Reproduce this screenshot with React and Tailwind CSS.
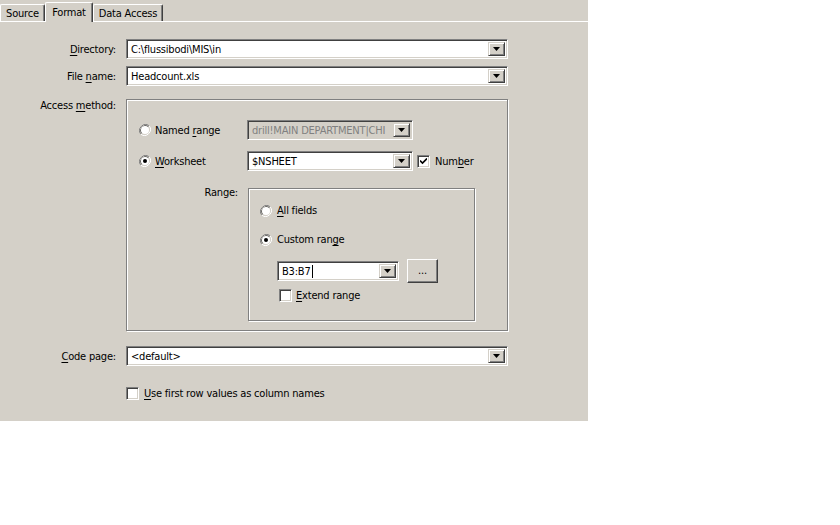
import React from "react";

const font = { fontFamily: '"DejaVu Sans Condensed", "Liberation Sans", Arial, sans-serif' };

function U({ children }) {
  return <span className="underline underline-offset-2">{children}</span>;
}

function Arrow() {
  return (
    <svg width="7" height="4" viewBox="0 0 7 4">
      <path d="M0 0h7L3.5 4z" fill="#000" />
    </svg>
  );
}

function DropButton() {
  return (
    <div className="w-[17px] h-full flex items-center justify-center bg-[#d4d0c8] border border-t-[#d4d0c8] border-l-[#d4d0c8] border-r-[#404040] border-b-[#404040] shadow-[inset_1px_1px_0_#fff,inset_-1px_-1px_0_#808080]">
      <Arrow />
    </div>
  );
}

function Combo({ value, className = "", disabled, caret }) {
  return (
    <div
      className={`flex items-stretch h-[20px] border border-t-[#808080] border-l-[#808080] border-r-white border-b-white shadow-[inset_1px_1px_0_#404040,inset_-1px_-1px_0_#d4d0c8] p-[2px] ${
        disabled ? "bg-[#d4d0c8]" : "bg-white"
      } ${className}`}
    >
      <div
        className={`flex-1 flex items-center pl-[2px] whitespace-nowrap overflow-hidden ${
          disabled ? "text-[#808080]" : "text-black"
        }`}
      >
        {value}
        {caret && <span className="inline-block w-px h-[13px] bg-black ml-px" />}
      </div>
      <DropButton />
    </div>
  );
}

function Radio({ checked }) {
  return (
    <svg width="12" height="12" viewBox="0 0 12 12" className="shrink-0">
      <path d="M10.2 1.8A6 6 0 0 0 1.8 10.2" stroke="#808080" fill="none" />
      <path d="M9.4 2.6A4.9 4.9 0 0 0 2.6 9.4" stroke="#404040" fill="none" />
      <path d="M1.8 10.2A6 6 0 0 0 10.2 1.8" stroke="#fff" fill="none" />
      <path d="M2.6 9.4A4.9 4.9 0 0 0 9.4 2.6" stroke="#d4d0c8" fill="none" />
      <circle cx="6" cy="6" r="4" fill="#fff" />
      {checked && <circle cx="6" cy="6" r="2" fill="#000" />}
    </svg>
  );
}

function Check({ checked }) {
  return (
    <div className="w-[13px] h-[13px] shrink-0 bg-white border border-t-[#808080] border-l-[#808080] border-r-white border-b-white shadow-[inset_1px_1px_0_#404040,inset_-1px_-1px_0_#d4d0c8] flex items-center justify-center">
      {checked && (
        <svg width="7" height="7" viewBox="0 0 7 7">
          <path d="M0 2.5l2.5 2.5L7 0.5" stroke="#000" strokeWidth="1.6" fill="none" />
        </svg>
      )}
    </div>
  );
}

function Frame({ className = "", children }) {
  return (
    <div
      className={`border border-[#808080] shadow-[inset_1px_1px_0_#fff,1px_1px_0_#fff] ${className}`}
    >
      {children}
    </div>
  );
}

function Tab({ active, className = "", children }) {
  return (
    <div
      className={`flex items-center justify-center border-t border-l border-t-white border-l-white border-r border-r-[#404040] rounded-t-[2px] shadow-[inset_-1px_0_0_#808080] ${
        active
          ? "h-[20px] -mb-px bg-[#d4d0c8] z-10 relative"
          : "h-[17px]"
      } ${className}`}
    >
      {children}
    </div>
  );
}

export default function App() {
  return (
    <div
      className="w-[840px] h-[525px] bg-white text-[11px] leading-[13px] tracking-[-0.2px] text-black"
      style={font}
    >
      <div className="w-[588px] h-[421px] bg-[#d4d0c8] flex flex-col">
        <div className="flex items-end h-[21px] pt-[1px]">
          <Tab className="w-[45px]">Source</Tab>
          <Tab active className="w-[48px]">Format</Tab>
          <Tab className="w-[70px]">Data Access</Tab>
        </div>
        <div className="flex-1 border-t border-white flex flex-col pt-[17px]">
          <div className="flex items-center gap-[10px]">
            <div className="w-[116px] text-right">
              <U>D</U>irectory:
            </div>
            <Combo value="C:\flussibodi\MIS\in" className="w-[382px]" />
          </div>
          <div className="flex items-center gap-[10px] mt-[7px]">
            <div className="w-[116px] text-right">
              File <U>n</U>ame:
            </div>
            <Combo value="Headcount.xls" className="w-[382px]" />
          </div>
          <div className="flex items-start gap-[10px] mt-[13px]">
            <div className="w-[116px] text-right">
              Access <U>m</U>ethod:
            </div>
            <Frame className="w-[382px] h-[232px] pl-[12px] pt-[20px]">
              <div className="flex items-center">
                <div className="w-[108px] flex items-center gap-[4px]">
                  <Radio />
                  <span>
                    Named <U>r</U>ange
                  </span>
                </div>
                <Combo value="drill!MAIN DEPARTMENT|CHI" disabled className="w-[166px]" />
              </div>
              <div className="flex items-center mt-[11px]">
                <div className="w-[108px] flex items-center gap-[4px]">
                  <Radio checked />
                  <span>
                    <U>W</U>orksheet
                  </span>
                </div>
                <Combo value="$NSHEET" className="w-[166px]" />
                <div className="flex items-center gap-[5px] ml-[4px]">
                  <Check checked />
                  <span>
                    Num<U>b</U>er
                  </span>
                </div>
              </div>
              <div className="flex items-start mt-[17px]">
                <div className="w-[99px] text-right -mt-[2px]">Range:</div>
                <Frame className="ml-[10px] w-[227px] h-[133px] pl-[11px] pt-[15px]">
                  <div className="flex items-center gap-[5px]">
                    <Radio />
                    <span>
                      <U>A</U>ll fields
                    </span>
                  </div>
                  <div className="flex items-center gap-[5px] mt-[16px]">
                    <Radio checked />
                    <span>
                      Custom ran<U>g</U>e
                    </span>
                  </div>
                  <div className="flex items-center ml-[17px] mt-[13px]">
                    <Combo value="B3:B7" caret className="w-[122px]" />
                    <div className="ml-[8px] w-[31px] h-[24px] flex items-center justify-center bg-[#d4d0c8] border border-t-white border-l-white border-r-[#404040] border-b-[#404040] shadow-[inset_-1px_-1px_0_#808080] pb-[2px]">
                      ...
                    </div>
                  </div>
                  <div className="flex items-center gap-[4px] ml-[19px] mt-[6px]">
                    <Check />
                    <span>
                      <U>E</U>xtend range
                    </span>
                  </div>
                </Frame>
              </div>
            </Frame>
          </div>
          <div className="flex items-center gap-[10px] mt-[15px]">
            <div className="w-[116px] text-right">
              <U>C</U>ode page:
            </div>
            <Combo value="<default>" className="w-[382px]" />
          </div>
          <div className="flex items-center gap-[5px] ml-[126px] mt-[21px]">
            <Check />
            <span>
              <U>U</U>se first row values as column names
            </span>
          </div>
        </div>
      </div>
    </div>
  );
}
